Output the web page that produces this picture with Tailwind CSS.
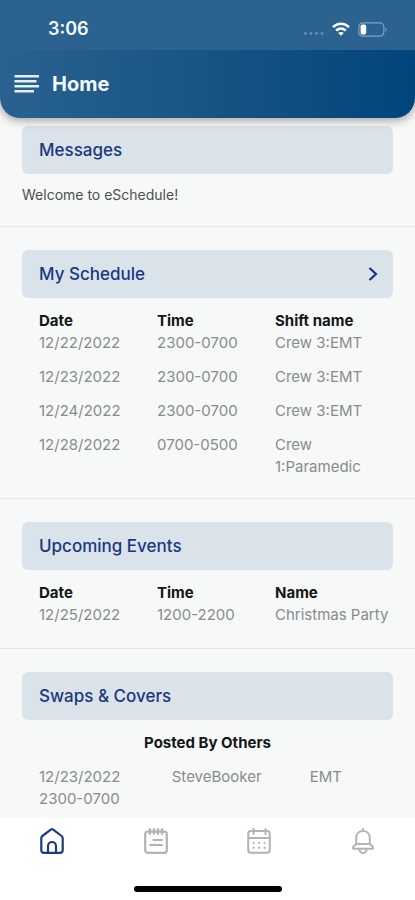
<!DOCTYPE html>
<html lang="en">
<head>
  <meta charset="UTF-8" />
  <meta name="viewport" content="width=device-width, initial-scale=1.0" />
  <title>eSchedule</title>
  <script src="https://cdn.jsdelivr.net/npm/@tailwindcss/browser@4"></script>
</head>
<body class="bg-[#f6f9f8] font-['Inter',sans-serif] min-h-screen flex flex-col text-[15px] leading-[22px] text-[#898c8e]">

<!-- Header -->
<header class="relative z-10 rounded-b-[20px] overflow-hidden bg-linear-to-r from-[#29628f] to-[#00457b] shadow-[0_3px_8px_rgba(60,40,50,0.4)] text-[#f4f9fd]">
  <div class="h-[50px] bg-[#2b628f] flex items-center justify-between pt-2 pl-12 pr-7">
    <span class="text-lg font-semibold">3:06</span>
    <div class="flex items-center gap-2">
      <svg class="w-5 h-4" viewBox="0 0 20 16" fill="#6690b3">
        <circle cx="1.5" cy="12.5" r="1.4" /><circle cx="7" cy="12.5" r="1.4" /><circle cx="12.5" cy="12.5" r="1.4" /><circle cx="18" cy="12.5" r="1.4" />
      </svg>
      <svg class="w-[18px] h-[14px]" viewBox="0 0 18 14" fill="none" stroke="#fff" stroke-width="2.6">
        <path d="M1 5.2C5.5 .6 12.5 .6 17 5.2" />
        <path d="M4.2 8.6C7 6 11 6 13.8 8.6" />
        <path d="M9 13.8L6.2 11C7.8 9.5 10.2 9.5 11.8 11Z" fill="#fff" stroke="none" />
      </svg>
      <svg class="w-[29px] h-[15px]" viewBox="0 0 29 15" fill="none">
        <rect x=".8" y=".8" width="25" height="13.4" rx="4" stroke="#7fa2c0" stroke-width="1.2" />
        <rect x="2.6" y="2.6" width="5.6" height="9.8" rx="1.6" fill="#fff" />
        <path d="M27.3 5.2C28.9 6 28.9 9 27.3 9.8Z" fill="#7fa2c0" />
      </svg>
    </div>
  </div>
  <div class="h-[68px] flex items-center gap-3 pl-3.5">
    <button type="button" aria-label="Menu">
      <svg class="w-[26px] h-5" viewBox="0 0 26 20" fill="none" stroke="#e6eef6" stroke-width="2.6">
        <path d="M.5 2.3H25M.5 7.3H22.5M.5 12.3H25M.5 17.3H20" />
      </svg>
    </button>
    <h1 class="text-xl font-bold">Home</h1>
  </div>
</header>

<main class="flex-1 pt-2">
  <!-- Messages -->
  <section class="border-b border-[#e2e6e7] pb-5">
    <h2 class="mx-[22px] h-12 px-[17px] flex items-center rounded-md bg-[#dbe3ea] text-[17px] font-medium text-[#19387f]">Messages</h2>
    <p class="mx-[22px] pt-2.5 text-sm leading-[22px] text-[#4c4f50]">Welcome to eSchedule!</p>
  </section>

  <!-- My Schedule -->
  <section class="border-b border-[#e2e6e7] pt-[23px] pb-2">
    <h2 class="mx-[22px] rounded-md bg-[#dbe3ea] text-[17px] font-medium text-[#19387f]">
      <a href="#schedule" class="h-12 pl-[17px] pr-3.5 flex items-center justify-between">
        My Schedule
        <svg class="w-3 h-4" viewBox="0 0 12 16" fill="none" stroke="#1b2f86" stroke-width="2.2"><path d="M2.5 2L9 8L2.5 14" /></svg>
      </a>
    </h2>
    <div class="pl-[39px] pr-[22px] pt-3">
      <table class="w-full table-fixed text-left">
        <thead class="text-[#141617]">
          <tr><th class="font-bold">Date</th><th class="font-bold">Time</th><th class="font-bold">Shift name</th></tr>
        </thead>
        <tbody class="align-top">
          <tr><td class="pb-3">12/22/2022</td><td>2300-0700</td><td>Crew 3:EMT</td></tr>
          <tr><td class="pb-3">12/23/2022</td><td>2300-0700</td><td>Crew 3:EMT</td></tr>
          <tr><td class="pb-3">12/24/2022</td><td>2300-0700</td><td>Crew 3:EMT</td></tr>
          <tr><td>12/28/2022</td><td>0700-0500</td><td class="pb-3">Crew<br />1:Paramedic</td></tr>
        </tbody>
      </table>
    </div>
  </section>

  <!-- Upcoming Events -->
  <section class="border-b border-[#e2e6e7] pt-[23px] pb-2.5">
    <h2 class="mx-[22px] h-12 px-[17px] flex items-center rounded-md bg-[#dbe3ea] text-[17px] font-medium text-[#19387f]">Upcoming Events</h2>
    <div class="pl-[39px] pr-[22px] pt-3">
      <table class="w-full table-fixed text-left">
        <thead class="text-[#141617]">
          <tr><th class="font-bold">Date</th><th class="font-bold">Time</th><th class="font-bold">Name</th></tr>
        </thead>
        <tbody class="align-top">
          <tr><td class="pb-3">12/25/2022</td><td>1200-2200</td><td class="whitespace-nowrap">Christmas Party</td></tr>
        </tbody>
      </table>
    </div>
  </section>

  <!-- Swaps & Covers -->
  <section class="pt-[23px] pb-2">
    <h2 class="mx-[22px] h-12 px-[17px] flex items-center rounded-md bg-[#dbe3ea] text-[17px] font-medium text-[#19387f]">Swaps &amp; Covers</h2>
    <h3 class="pt-3 text-center font-bold text-[#141617]">Posted By Others</h3>
    <div class="pl-[39px] pr-[22px] pt-3">
      <table class="w-full table-fixed text-left">
        <tbody class="align-top">
          <tr><td class="w-3/8">12/23/2022<br />2300-0700</td><td class="w-[39%]">SteveBooker</td><td>EMT</td></tr>
        </tbody>
      </table>
    </div>
  </section>
</main>

<!-- Bottom tabs -->
<footer class="bg-white pt-2.5 pb-2">
  <nav class="grid grid-cols-4 justify-items-center text-[#b3b3b3]">
    <a href="#home" aria-label="Home" class="text-[#1c3b80]">
      <svg class="w-6 h-[26px]" viewBox="0 0 24 26" fill="none" stroke="currentColor" stroke-width="2.2" stroke-linejoin="round">
        <path d="M1.3 10.2C1.3 9.2 1.6 8.6 2.4 8L10.8 1.6C11.6 1 12.4 1 13.2 1.6L21.6 8C22.4 8.6 22.7 9.2 22.7 10.2V22C22.7 23.9 21.7 24.8 20 24.8H4C2.3 24.8 1.3 23.9 1.3 22Z" />
        <path d="M8 24.5V18.2C8 12.6 16 12.6 16 18.2V24.5" />
      </svg>
    </a>
    <a href="#notes" aria-label="Notes">
      <svg class="w-6 h-[26px]" viewBox="0 0 24 26" fill="none" stroke="currentColor" stroke-width="2.2" stroke-linecap="round">
        <rect x="1.2" y="3.6" width="21.6" height="21.2" rx="2.5" />
        <path d="M6 1.2V6M10 1.2V6M14 1.2V6M18 1.2V6" />
        <path d="M9.5 12H18M6 17H18" stroke-width="2" />
      </svg>
    </a>
    <a href="#calendar" aria-label="Calendar">
      <svg class="w-6 h-[26px]" viewBox="0 0 24 26" fill="none" stroke="currentColor" stroke-width="2" stroke-linecap="round">
        <path d="M6.5 3H4C2.2 3 1.2 4 1.2 5.8V22C1.2 23.8 2.2 24.8 4 24.8H20C21.8 24.8 22.8 23.8 22.8 22V5.8C22.8 4 21.8 3 20 3H18.5M6.5 3H18.5M1.2 10H22.8" />
        <path d="M6.5 1V6M18.5 1V6" />
        <path d="M6.5 15H6.6M12 15H12.1M17.5 15H17.6M6.5 19.8H6.6M12 19.8H12.1M17.5 19.8H17.6" stroke-width="2.2" />
      </svg>
    </a>
    <a href="#alerts" aria-label="Alerts">
      <svg class="w-6 h-[26px]" viewBox="0 0 24 26" fill="none" stroke="currentColor" stroke-width="2" stroke-linecap="round" stroke-linejoin="round">
        <path d="M12 1V3M5.2 16V9.8C5.2 5.8 8 3 12 3C16 3 18.8 5.8 18.8 9.8V16" />
        <path d="M5.2 16H18.8L21.8 18.8V20.8H2.2V18.8Z" />
        <path d="M8.3 21C8.8 26.2 15.2 26.2 15.7 21" />
      </svg>
    </a>
  </nav>
  <div class="mx-auto mt-8 h-1.5 w-[148px] rounded-full bg-black"></div>
</footer>
</body>
</html>
